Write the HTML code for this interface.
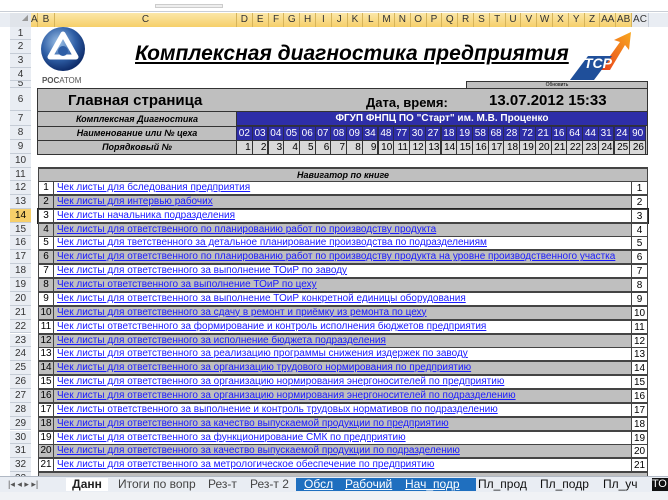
<!DOCTYPE html>
<html><head><meta charset="utf-8"><style>
*{margin:0;padding:0;box-sizing:border-box}
body{width:668px;height:500px;overflow:hidden;background:#fff;font-family:"Liberation Sans","DejaVu Sans",sans-serif;position:relative}
.a{position:absolute}
.ch{position:absolute;top:13px;height:14px;font-size:10px;line-height:14px;text-align:center;color:#333;border-right:1px solid #d6b45a;background:linear-gradient(#fbe7a8,#f6cf6a)}
.rh{position:absolute;left:10px;width:21px;font-size:10px;text-align:center;color:#333;background:#e9edf3;border-bottom:1px solid #c5ccd6}
.c{position:absolute;border:1px solid #333;font-size:10px;text-align:center}
.nr{position:absolute;left:38px;width:610px;height:14px;border:1px solid #444;font-size:10px;line-height:12px}
.nr .n{position:absolute;left:0;width:15px;top:0;height:12px;text-align:center;border-right:1px solid #444}
.nr .t{position:absolute;left:18px;top:0;color:#1a1aff;text-decoration:underline;white-space:nowrap}
.nr .m{position:absolute;left:592px;width:16px;top:-1px;height:14px;text-align:center;border-left:1px solid #444;border-top:1px solid #444;border-bottom:1px solid #444;background:#fff;line-height:13px}
.g{background:#bfbfbf}.w{background:#fff}
.tab{position:absolute;top:478px;height:13px;font-size:11px;line-height:13px;color:#444}
</style></head><body>
<div class="a" style="left:0;top:0;width:668px;height:12px;background:#fff;border-bottom:1px solid #c9ced6"></div>
<div class="a" style="left:155px;top:4px;width:68px;height:4px;border:1px solid #ccc;background:#eee"></div>
<div class="a" style="left:0;top:13px;width:668px;height:14px;background:#e9edf3"></div>
<div class="a" style="left:10px;top:13px;width:21px;height:14px;background:#e0e4ea;font-size:8px;color:#999;text-align:right;padding-right:3px">◢</div>
<div class="ch" style="left:31px;width:7px">A</div>
<div class="ch" style="left:38px;width:17px">B</div>
<div class="ch" style="left:55px;width:182px">C</div>
<div id="hd"></div>
<div class="ch" style="left:632px;width:17px;background:#e6e9ee;border-color:#c5ccd6">AC</div>

<div class="rh" style="top:27px;height:13px;line-height:13px">1</div>
<div class="rh" style="top:40px;height:14px;line-height:14px">2</div>
<div class="rh" style="top:54px;height:14px;line-height:14px">3</div>
<div class="rh" style="top:68px;height:13px;line-height:13px">4</div>
<div class="rh" style="top:81px;height:7px;line-height:5px;overflow:hidden">5</div>
<div class="rh" style="top:88px;height:23px;line-height:23px">6</div>
<div class="rh" style="top:111px;height:15px;line-height:15px">7</div>
<div class="rh" style="top:126px;height:14px;line-height:14px">8</div>
<div class="rh" style="top:140px;height:14px;line-height:14px">9</div>
<div class="rh" style="top:154px;height:14px;line-height:14px">10</div>
<div id="rhs"></div>

<svg class="a" style="left:40px;top:26px" width="48" height="48" viewBox="0 0 48 48">
<defs><radialGradient id="lg" cx="40%" cy="35%" r="65%"><stop offset="0" stop-color="#9fc3e8"/><stop offset=".6" stop-color="#2f5fa6"/><stop offset="1" stop-color="#0f2d6b"/></radialGradient></defs>
<circle cx="23" cy="23" r="22" fill="url(#lg)"/>
<path d="M23 8 L36 31 L10 31 Z" fill="none" stroke="#fff" stroke-width="5" stroke-linejoin="round"/>
<circle cx="23" cy="25" r="5" fill="#2f5fa6"/>
</svg>
<div class="a" style="left:42px;top:76px;font-size:8px;font-weight:bold;color:#555">РОС<span style="font-weight:normal">АТОМ</span></div>

<div class="a" style="left:135px;top:42px;font-size:21px;font-weight:bold;font-style:italic;text-decoration:underline;color:#000">Комплексная диагностика предприятия</div>

<svg class="a" style="left:570px;top:30px" width="64" height="50" viewBox="0 0 64 50">
<defs><linearGradient id="og" x1="0" y1="1" x2="1" y2="0"><stop offset="0" stop-color="#e8401c"/><stop offset="1" stop-color="#f8a81e"/></linearGradient></defs>
<path d="M30 40 L50 12 L44 10 L61 2 L59 20 L55 15 L40 40 Z" fill="url(#og)"/>
<path d="M0 50 L18 26 L42 26 L24 50 Z" fill="#1f4f9a"/>
<text x="14" y="38" font-size="14" font-weight="bold" font-style="italic" fill="#fff" font-family="Liberation Sans">ТСР</text>
</svg>

<div class="a" style="left:466px;top:81px;width:182px;height:8px;background:#bfbfbf;border:1px solid #333;font-size:5px;text-align:center;line-height:6px">Обновить</div>
<div class="a" style="left:37px;top:88px;width:611px;height:67px;background:#bfbfbf;border:1px solid #333"></div>
<div class="a" style="left:68px;top:92px;font-size:15px;font-weight:bold">Главная страница</div>
<div class="a" style="left:366px;top:95px;font-size:13px;font-weight:bold">Дата, время:</div>
<div class="a" style="left:489px;top:92px;font-size:15px;font-weight:bold">13.07.2012 15:33</div>
<div class="c" style="left:37px;top:111px;width:200px;height:16px;font-size:9px;font-style:italic;font-weight:bold;line-height:14px;background:#bfbfbf">Комплексная Диагностика</div>
<div class="c" style="left:37px;top:126px;width:200px;height:15px;font-size:9px;font-style:italic;font-weight:bold;line-height:13px;background:#bfbfbf">Наименование или № цеха</div>
<div class="c" style="left:37px;top:140px;width:200px;height:15px;font-size:9px;font-style:italic;font-weight:bold;line-height:13px;background:#bfbfbf">Порядковый №</div>
<div class="a" style="left:236px;top:111px;width:412px;height:15px;background:#2e2ea8;border:1px solid #333;color:#fff;font-size:10px;font-weight:bold;text-align:center;line-height:13px">ФГУП ФНПЦ ПО "Старт" им. М.В. Проценко</div>
<div id="cells"></div>

<div class="a" style="left:38px;top:167px;width:610px;height:15px;background:#bfbfbf;border:1px solid #444;border-top:2px solid #444;font-size:9px;font-weight:bold;font-style:italic;text-align:center;line-height:12px">Навигатор по книге</div>
<div id="nav"></div>

<div class="a" style="left:0;top:476px;width:668px;height:16px;background:#e9edf3;border-top:1px solid #b0b8c4"></div>
<div class="tab" style="left:8px;font-size:9px;color:#555">|◂ ◂ ▸ ▸|</div>
<div class="tab" style="left:66px;width:42px;background:#fff;font-weight:bold;color:#222;text-align:center;font-size:12px">Данн</div>
<div class="tab" style="left:118px;font-size:12px">Итоги по вопр</div>
<div class="tab" style="left:208px;font-size:12px">Рез-т</div>
<div class="tab" style="left:250px;font-size:12px">Рез-т 2</div>
<div class="tab" style="left:296px;width:180px;background:#1f6fbf;"></div>
<div class="tab" style="left:304px;color:#fff;text-decoration:underline;font-size:12px">Обсл</div>
<div class="tab" style="left:345px;color:#fff;text-decoration:underline;font-size:12px">Рабочий</div>
<div class="tab" style="left:405px;color:#fff;text-decoration:underline;font-size:12px">Нач_подр</div>
<div class="tab" style="left:478px;color:#111;font-size:12px">Пл_прод</div>
<div class="tab" style="left:540px;color:#111;font-size:12px">Пл_подр</div>
<div class="tab" style="left:603px;color:#111;font-size:12px">Пл_уч</div>
<div class="tab" style="left:652px;width:16px;background:#111;color:#fff">ТО</div>
<div class="a" style="left:0;top:492px;width:668px;height:8px;background:#f0f2f5"></div>

<script>
var L="DEFGHIJKLMNOPQRSTUVWXYZ".split("").concat(["AA","AB"]);
var h="";for(var i=0;i<25;i++){h+='<div class="ch" style="left:'+(237+i*15.8).toFixed(1)+'px;width:15.8px">'+L[i]+'</div>'}
document.getElementById("hd").innerHTML=h;
var codes="02 03 04 05 06 07 08 09 34 48 77 30 27 18 19 58 68 28 72 21 16 64 44 31 24 90".split(" ");
var c="";for(i=0;i<26;i++){var x=(236+i*15.73).toFixed(1);
c+='<div class="c" style="left:'+x+'px;top:126px;width:16.7px;height:15px;background:#2e2ea8;color:#fff;line-height:13px;border-color:#2a2a55">'+codes[i]+'</div>';
c+='<div class="c" style="left:'+x+'px;top:140px;width:16.7px;height:15px;background:#d9d9d9;line-height:13px;text-align:right;padding-right:1px">'+(i+1)+'</div>';}
document.getElementById("cells").innerHTML=c;
var T=["Чек листы для бследования предприятия","Чек листы для интервью рабочих","Чек листы начальника подразделения","Чек листы для ответственного по планированию работ по производству продукта","Чек листы для тветственного за детальное планирование производства по подразделениям","Чек листы для ответственного по планированию работ по производству продукта на уровне производственного участка","Чек листы для ответственного за выполнение ТОиР по заводу","Чек листы ответственного за выполнение ТОиР по цеху","Чек листы для ответственного за выполнение ТОиР конкретной единицы оборудования","Чек листы для ответственного за сдачу в ремонт и приёмку из ремонта по цеху","Чек листы ответственного за формирование и контроль исполнения бюджетов предприятия","Чек листы для ответственного за исполнение бюджета подразделения","Чек листы для ответственного за реализацию программы снижения издержек по заводу","Чек листы для ответственного за организацию трудового нормирования по предприятию","Чек листы для ответственного за организацию нормирования энергоносителей по предприятию","Чек листы для ответственного за организацию нормирования энергоносителей по подразделению","Чек листы ответственного за выполнение и контроль трудовых нормативов по подразделению","Чек листы для ответственного за качество выпускаемой продукции по предприятию","Чек листы для ответственного за функционирование СМК по предприятию","Чек листы для ответственного за качество выпускаемой продукции по подразделению","Чек листы для ответственного за метрологическое обеспечение по предприятию"];
var n="",r="",rt=181,rs=13.86;
r+='<div class="rh" style="top:168px;height:13px;line-height:13px">11</div>';
for(i=0;i<22;i++){var y=(rt+i*rs).toFixed(1);var num=i+12;
var sel=num==14;
r+='<div class="rh" style="top:'+y+'px;height:13.86px;line-height:13px;'+(sel?'background:#f6cf6a;color:#000':'')+'">'+num+'</div>';
if(i<21){var cls=(i%2)?"g":"w";
n+='<div class="nr '+cls+'" style="top:'+y+'px;'+(sel?'outline:1px solid #222;':'')+'"><div class="n">'+(i+1)+'</div><div class="t">'+T[i]+'</div><div class="m">'+(i+1)+'</div></div>';}}
n+='<div class="nr g" style="top:'+(rt+21*rs).toFixed(1)+'px;height:5px"></div>';
document.getElementById("rhs").innerHTML=r;document.getElementById("nav").innerHTML=n;
</script>
</body></html>
